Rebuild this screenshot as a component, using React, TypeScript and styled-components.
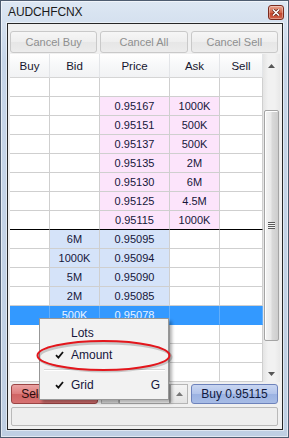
import styled, { createGlobalStyle } from "styled-components";

const GlobalStyle = createGlobalStyle`
  html, body {
    margin: 0;
    padding: 0;
    background: #ffffff;
  }

  body {
    font-family: "Liberation Sans", Arial, sans-serif;
    font-size: 11px;
  }
`;

const Window = styled.div`
  position: relative;
  box-sizing: border-box;
  width: 289px;
  height: 438px;
  display: flex;
  flex-direction: column;
  border: 1px solid #4e5c70;
  background: linear-gradient(#dde7f3, #c6d5e8 60px, #bfcfe3);
  box-shadow: inset 0 0 0 1px rgba(255, 255, 255, 0.55);
  overflow: hidden;
`;

const TitleBar = styled.div`
  box-sizing: border-box;
  height: 22px;
  flex: none;
  display: flex;
  align-items: center;
  justify-content: space-between;
  padding: 0 4px 0 7px;
`;

const Title = styled.span`
  font-size: 12px;
  color: #1b1b1b;
  letter-spacing: -0.1px;
`;

const CloseButton = styled.div`
  box-sizing: border-box;
  width: 16px;
  height: 15px;
  display: flex;
  align-items: center;
  justify-content: center;
  border: 1px solid #7a2a1e;
  border-radius: 3px;
  background: linear-gradient(#eba48f, #d2644a 50%, #c0412a 51%, #d0624a);
  box-shadow: inset 0 0 0 1px rgba(255, 255, 255, 0.35);
`;

const Panel = styled.div`
  flex: 1;
  min-height: 0;
  display: flex;
  flex-direction: column;
  margin: 0 5px 7px 6px;
  padding: 7px 2px 3px 2px;
  border: 1px solid #262626;
  background: #f0f0f0;
  box-shadow: 0 0 0 1px rgba(255, 255, 255, 0.5);
`;

const Toolbar = styled.div`
  display: grid;
  grid-template-columns: repeat(3, 1fr);
  gap: 3px;
  padding-right: 2px;
`;

const ToolButton = styled.div`
  box-sizing: border-box;
  height: 22px;
  display: flex;
  align-items: center;
  justify-content: center;
  border: 1px solid #c9c9c9;
  border-radius: 3px;
  background: linear-gradient(#f6f6f6, #eeeeee 50%, #e6e6e6 51%, #ececec);
  color: #8e8f8f;
`;

const GridFrame = styled.div`
  margin-top: 1px;
  display: flex;
  background: #ffffff;
`;

const Table = styled.div`
  width: 253px;
  display: grid;
  grid-template-columns: 40px 50px 70px 50px 43px;
  grid-auto-rows: 19px;
  grid-template-rows: 24px;
`;

const HeadCell = styled.div`
  box-sizing: border-box;
  display: flex;
  align-items: center;
  justify-content: center;
  border-right: 1px solid #e3e5e8;
  border-bottom: 1px solid #d5d5d5;
  background: linear-gradient(#ffffff, #f7f8f9 50%, #f1f2f4);
  color: #15152e;
  font-size: 11.5px;
`;

type Tone = "ask" | "bid" | "none";

const Cell = styled.div<{ $tone: Tone; $selected?: boolean; $divider?: boolean }>`
  box-sizing: border-box;
  display: flex;
  align-items: center;
  justify-content: center;
  border-right: 1px solid ${(p) => (p.$selected ? "#62aefb" : "#cfcfcf")};
  border-bottom: 1px solid ${(p) => (p.$divider ? "#000000" : p.$selected ? "#3399ff" : "#cfcfcf")};
  background: ${(p) =>
    p.$selected ? "#3399ff" : p.$tone === "ask" ? "#fce4fb" : p.$tone === "bid" ? "#d5e3f9" : "#ffffff"};
  color: ${(p) => (p.$selected ? "#e8f2ff" : "#16163a")};
`;

const Scrollbar = styled.div`
  width: 17px;
  display: flex;
  flex-direction: column;
  background: linear-gradient(90deg, #e4e4e4, #f1f1f1 30%, #f1f1f1 70%, #e8e8e8);
`;

const ScrollArrow = styled.div`
  height: 17px;
  flex: none;
  display: flex;
  align-items: center;
  justify-content: center;
`;

const ScrollTrack = styled.div`
  flex: 1;
  display: flex;
  flex-direction: column;
  align-items: center;
  padding-top: 32px;
`;

const Thumb = styled.div`
  box-sizing: border-box;
  width: 15px;
  height: 231px;
  display: flex;
  align-items: center;
  justify-content: center;
  border: 1px solid #a4a4a4;
  border-radius: 2px;
  background: linear-gradient(90deg, #f4f4f4, #e9e9e9 45%, #d9d9d9 55%, #cdcdcd);
  box-shadow: inset 1px 1px 0 #ffffff;
`;

const Grip = styled.div`
  width: 7px;
  height: 7px;
  background: repeating-linear-gradient(#5a5a5a 0 1px, #f4f4f4 1px 2px);
`;

const BottomBar = styled.div`
  margin-top: 2px;
  display: grid;
  grid-template-columns: repeat(3, 1fr);
  gap: 3px;
  padding: 0 2px 0 1px;
`;

const TradeButton = styled.div<{ $side: "sell" | "buy" }>`
  box-sizing: border-box;
  height: 20px;
  display: flex;
  align-items: center;
  justify-content: center;
  border-radius: 3px;
  font-size: 12px;
  border: 1px solid ${(p) => (p.$side === "sell" ? "#9a4444" : "#6d82bb")};
  background: ${(p) =>
    p.$side === "sell"
      ? "linear-gradient(#eba3a3, #dd7c7c 50%, #d06464 51%, #d77272)"
      : "linear-gradient(#c9d6f1, #b1c3ea 50%, #9bb2e2 51%, #a7bce6)"};
  color: ${(p) => (p.$side === "sell" ? "#2a0b0b" : "#101a40")};
`;

const Spin = styled.div`
  display: flex;
  height: 20px;
`;

const SpinButton = styled.div`
  box-sizing: border-box;
  width: 18px;
  display: flex;
  align-items: center;
  justify-content: center;
  border: 1px solid #b5b5b5;
  background: linear-gradient(#f4f4f4, #e3e3e3);
`;

const SpinField = styled.div`
  flex: 1;
  box-sizing: border-box;
  border: 1px solid #a9a9a9;
  background: #ffffff;
`;

const StatusBar = styled.div`
  box-sizing: border-box;
  margin: 3px 2px 0 1px;
  height: 19px;
  border: 1px solid #b9b9b9;
  border-radius: 2px;
  background: #eeeeee;
`;

const Menu = styled.div`
  position: absolute;
  left: 38px;
  top: 317px;
  box-sizing: border-box;
  width: 130px;
  padding: 3px 2px;
  border: 1px solid #979797;
  background: #f2f2f2;
  box-shadow: 3px 3px 3px rgba(0, 0, 0, 0.3);
  z-index: 2;
`;

const MenuItem = styled.div`
  height: 22px;
  display: grid;
  grid-template-columns: 29px 1fr auto;
  align-items: center;
  padding-right: 6px;
  color: #15153a;
  font-size: 12px;
`;

const MenuCheck = styled.span`
  display: flex;
  justify-content: flex-end;
  padding-right: 7px;
`;

const MenuSeparator = styled.div`
  height: 1px;
  margin: 3px 1px 3px 2px;
  background: #d7d7d7;
  border-bottom: 1px solid #ffffff;
`;

const Highlight = styled.svg`
  position: absolute;
  left: 34px;
  top: 338px;
  z-index: 3;
  overflow: visible;
`;

const askRows = [
  ["0.95167", "1000K"],
  ["0.95151", "500K"],
  ["0.95137", "500K"],
  ["0.95135", "2M"],
  ["0.95130", "6M"],
  ["0.95125", "4.5M"],
  ["0.95115", "1000K"],
];

const bidRows = [
  ["6M", "0.95095"],
  ["1000K", "0.95094"],
  ["5M", "0.95090"],
  ["2M", "0.95085"],
  ["500K", "0.95078"],
];

type Row = {
  bid?: string;
  price?: string;
  ask?: string;
  selected?: boolean;
  divider?: boolean;
};

const rows: Row[] = [
  {},
  ...askRows.map(([price, ask], i) => ({ price, ask, divider: i === askRows.length - 1 })),
  ...bidRows.map(([bid, price], i) => ({ bid, price, selected: i === bidRows.length - 1 })),
  {},
  {},
  {},
];

function Check() {
  return (
    <svg width="9" height="8" viewBox="0 0 9 8">
      <path d="M1 4.2 L3.4 6.6 L8 1" fill="none" stroke="#111" strokeWidth="1.8" />
    </svg>
  );
}

function Arrow({ up, color = "#555" }: { up?: boolean; color?: string }) {
  return (
    <svg width="7" height="4" viewBox="0 0 7 4">
      <path d={up ? "M0 4 L3.5 0 L7 4 Z" : "M0 0 L7 0 L3.5 4 Z"} fill={color} />
    </svg>
  );
}

export default function App() {
  return (
    <>
      <GlobalStyle />
      <Window>
        <TitleBar>
          <Title>AUDCHFCNX</Title>
          <CloseButton>
            <svg width="8" height="7" viewBox="0 0 8 7">
              <path d="M1 0.5 L7 6.5 M7 0.5 L1 6.5" stroke="#5a1a10" strokeWidth="3" />
              <path d="M1 0.5 L7 6.5 M7 0.5 L1 6.5" stroke="#ffffff" strokeWidth="1.6" />
            </svg>
          </CloseButton>
        </TitleBar>

        <Panel>
          <Toolbar>
            <ToolButton>Cancel Buy</ToolButton>
            <ToolButton>Cancel All</ToolButton>
            <ToolButton>Cancel Sell</ToolButton>
          </Toolbar>

          <GridFrame>
            <Table>
              {["Buy", "Bid", "Price", "Ask", "Sell"].map((h) => (
                <HeadCell key={h}>{h}</HeadCell>
              ))}
              {rows.map((row, r) => {
                const tone: Tone = row.ask ? "ask" : row.bid ? "bid" : "none";
                const cells = [
                  { text: "", tone: "none" as Tone },
                  { text: row.bid ?? "", tone: row.bid ? tone : ("none" as Tone) },
                  { text: row.price ?? "", tone },
                  { text: row.ask ?? "", tone: row.ask ? tone : ("none" as Tone) },
                  { text: "", tone: "none" as Tone },
                ];
                return cells.map((c, i) => (
                  <Cell
                    key={`${r}-${i}`}
                    $tone={c.tone}
                    $selected={row.selected}
                    $divider={row.divider}
                  >
                    {c.text}
                  </Cell>
                ));
              })}
            </Table>

            <Scrollbar>
              <ScrollArrow style={{ height: 24 }}>
                <Arrow up />
              </ScrollArrow>
              <ScrollTrack>
                <Thumb>
                  <Grip />
                </Thumb>
              </ScrollTrack>
              <ScrollArrow>
                <Arrow />
              </ScrollArrow>
            </Scrollbar>
          </GridFrame>

          <BottomBar>
            <TradeButton $side="sell">Sell 0.95078</TradeButton>
            <Spin>
              <SpinButton />
              <SpinField />
              <SpinButton>
                <Arrow up color="#777" />
              </SpinButton>
            </Spin>
            <TradeButton $side="buy">Buy 0.95115</TradeButton>
          </BottomBar>

          <StatusBar />
        </Panel>

        <Menu>
          <MenuItem>
            <MenuCheck />
            <span>Lots</span>
            <span />
          </MenuItem>
          <MenuItem>
            <MenuCheck>
              <Check />
            </MenuCheck>
            <span>Amount</span>
            <span />
          </MenuItem>
          <MenuSeparator />
          <MenuItem>
            <MenuCheck>
              <Check />
            </MenuCheck>
            <span>Grid</span>
            <span>G</span>
          </MenuItem>
        </Menu>

        <Highlight width="138" height="34" viewBox="0 0 138 34">
          <ellipse cx="70" cy="18" rx="66" ry="14" fill="none" stroke="rgba(0,0,0,0.18)" strokeWidth="3" />
          <ellipse cx="68.5" cy="16.5" rx="66" ry="14.5" fill="none" stroke="#e3161c" strokeWidth="2" />
        </Highlight>
      </Window>
    </>
  );
}
